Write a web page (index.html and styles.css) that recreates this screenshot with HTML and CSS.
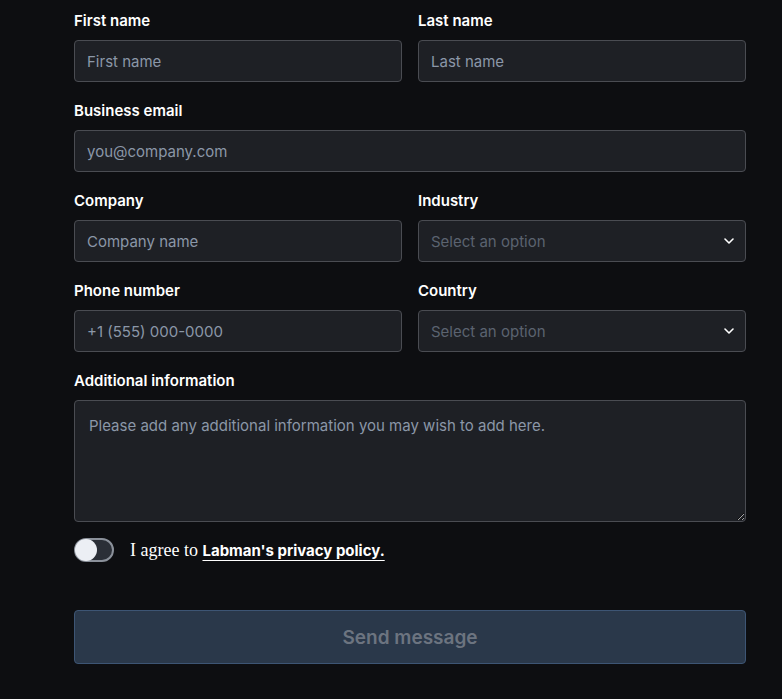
FILE: index.html
```html
<!DOCTYPE html>
<html lang="en">
<head>
<meta charset="utf-8">
<title>Contact</title>
<link rel="stylesheet" href="styles.css">
</head>
<body>
<form class="form">
  <div class="row">
    <div class="field">
      <label class="label">First name</label>
      <input class="input" type="text" placeholder="First name">
    </div>
    <div class="field">
      <label class="label">Last name</label>
      <input class="input" type="text" placeholder="Last name">
    </div>
  </div>
  <div class="field">
    <label class="label">Business email</label>
    <input class="input" type="email" placeholder="you@company.com">
  </div>
  <div class="row">
    <div class="field">
      <label class="label">Company</label>
      <input class="input" type="text" placeholder="Company name">
    </div>
    <div class="field">
      <label class="label">Industry</label>
      <div class="select">
        <span class="select-text">Select an option</span>
        <svg class="chev" width="10" height="6" viewBox="0 0 10 6"><path d="M1 1l4 4 4-4" fill="none" stroke="#fff" stroke-width="1.6" stroke-linecap="round" stroke-linejoin="round"/></svg>
      </div>
    </div>
  </div>
  <div class="row">
    <div class="field">
      <label class="label">Phone number</label>
      <input class="input" type="tel" placeholder="+1 (555) 000-0000">
    </div>
    <div class="field">
      <label class="label">Country</label>
      <div class="select">
        <span class="select-text">Select an option</span>
        <svg class="chev" width="10" height="6" viewBox="0 0 10 6"><path d="M1 1l4 4 4-4" fill="none" stroke="#fff" stroke-width="1.6" stroke-linecap="round" stroke-linejoin="round"/></svg>
      </div>
    </div>
  </div>
  <div class="field">
    <label class="label">Additional information</label>
    <textarea class="textarea" placeholder="Please add any additional information you may wish to add here."></textarea>
  </div>
  <div class="agree">
    <span class="toggle"><span class="knob"></span></span>
    <span class="agree-text">I agree to <a class="link" href="#">Labman's privacy policy.</a></span>
  </div>
  <button class="submit" type="button">Send message</button>
</form>
</body>
</html>
```
FILE: styles.css
```css
* { box-sizing: border-box; }
html, body { margin: 0; background: #0d0e11; }
body {
  font-family: Inter, "Noto Sans", sans-serif;
  color: #fff;
  padding: 11px 36px 0 74px;
}
.form { width: 672px; display: flex; flex-direction: column; }
.row { display: grid; grid-template-columns: 1fr 1fr; gap: 16px; }
.field { display: flex; flex-direction: column; margin-bottom: 19px; }
.label {
  font-size: 15px; font-weight: 600; line-height: 20px;
  margin-bottom: 9px; color: #fff;
}
.input, .select, .textarea {
  height: 42px;
  background: #1e2025;
  border: 1px solid #4a4c52;
  border-radius: 4px;
  color: #fff;
  font-family: inherit;
  font-size: 15px;
  padding: 0 12px;
  outline: none;
}
.input::placeholder { color: #8b97a8; }
.select { display: flex; align-items: center; justify-content: space-between; padding-right: 11px; }
.select-text { color: #5b6370; font-size: 15px; }
.textarea {
  height: 122px; resize: vertical;
  padding: 14px 14px; font-size: 15px; line-height: 22px;
  margin: 0; display: block;
}
.textarea::placeholder { color: #8b97a8; }
.agree { display: flex; align-items: center; gap: 16px; margin-top: -3px; height: 24px; }
.toggle {
  width: 40px; height: 24px; border-radius: 12px;
  background: #2b2f37; border: 2px solid #8a909a;
  display: flex; align-items: center; padding: 0;
}
.knob { width: 22px; height: 22px; margin-left: -1px; border-radius: 50%; background: #eceff4; }
.agree-text { font-family: "Liberation Serif", serif; font-size: 18px; color: #fff; }
.link {
  font-family: Inter, "Noto Sans", sans-serif; font-weight: 700; font-size: 15px;
  color: #fff; text-decoration: underline; text-underline-offset: 4px;
}
.submit {
  margin-top: 48px;
  height: 54px;
  background: #2a384a;
  border: 1px solid #3d5574;
  border-radius: 4px;
  color: #6c7480;
  font-family: inherit; font-size: 19px; font-weight: 600;
}
```
